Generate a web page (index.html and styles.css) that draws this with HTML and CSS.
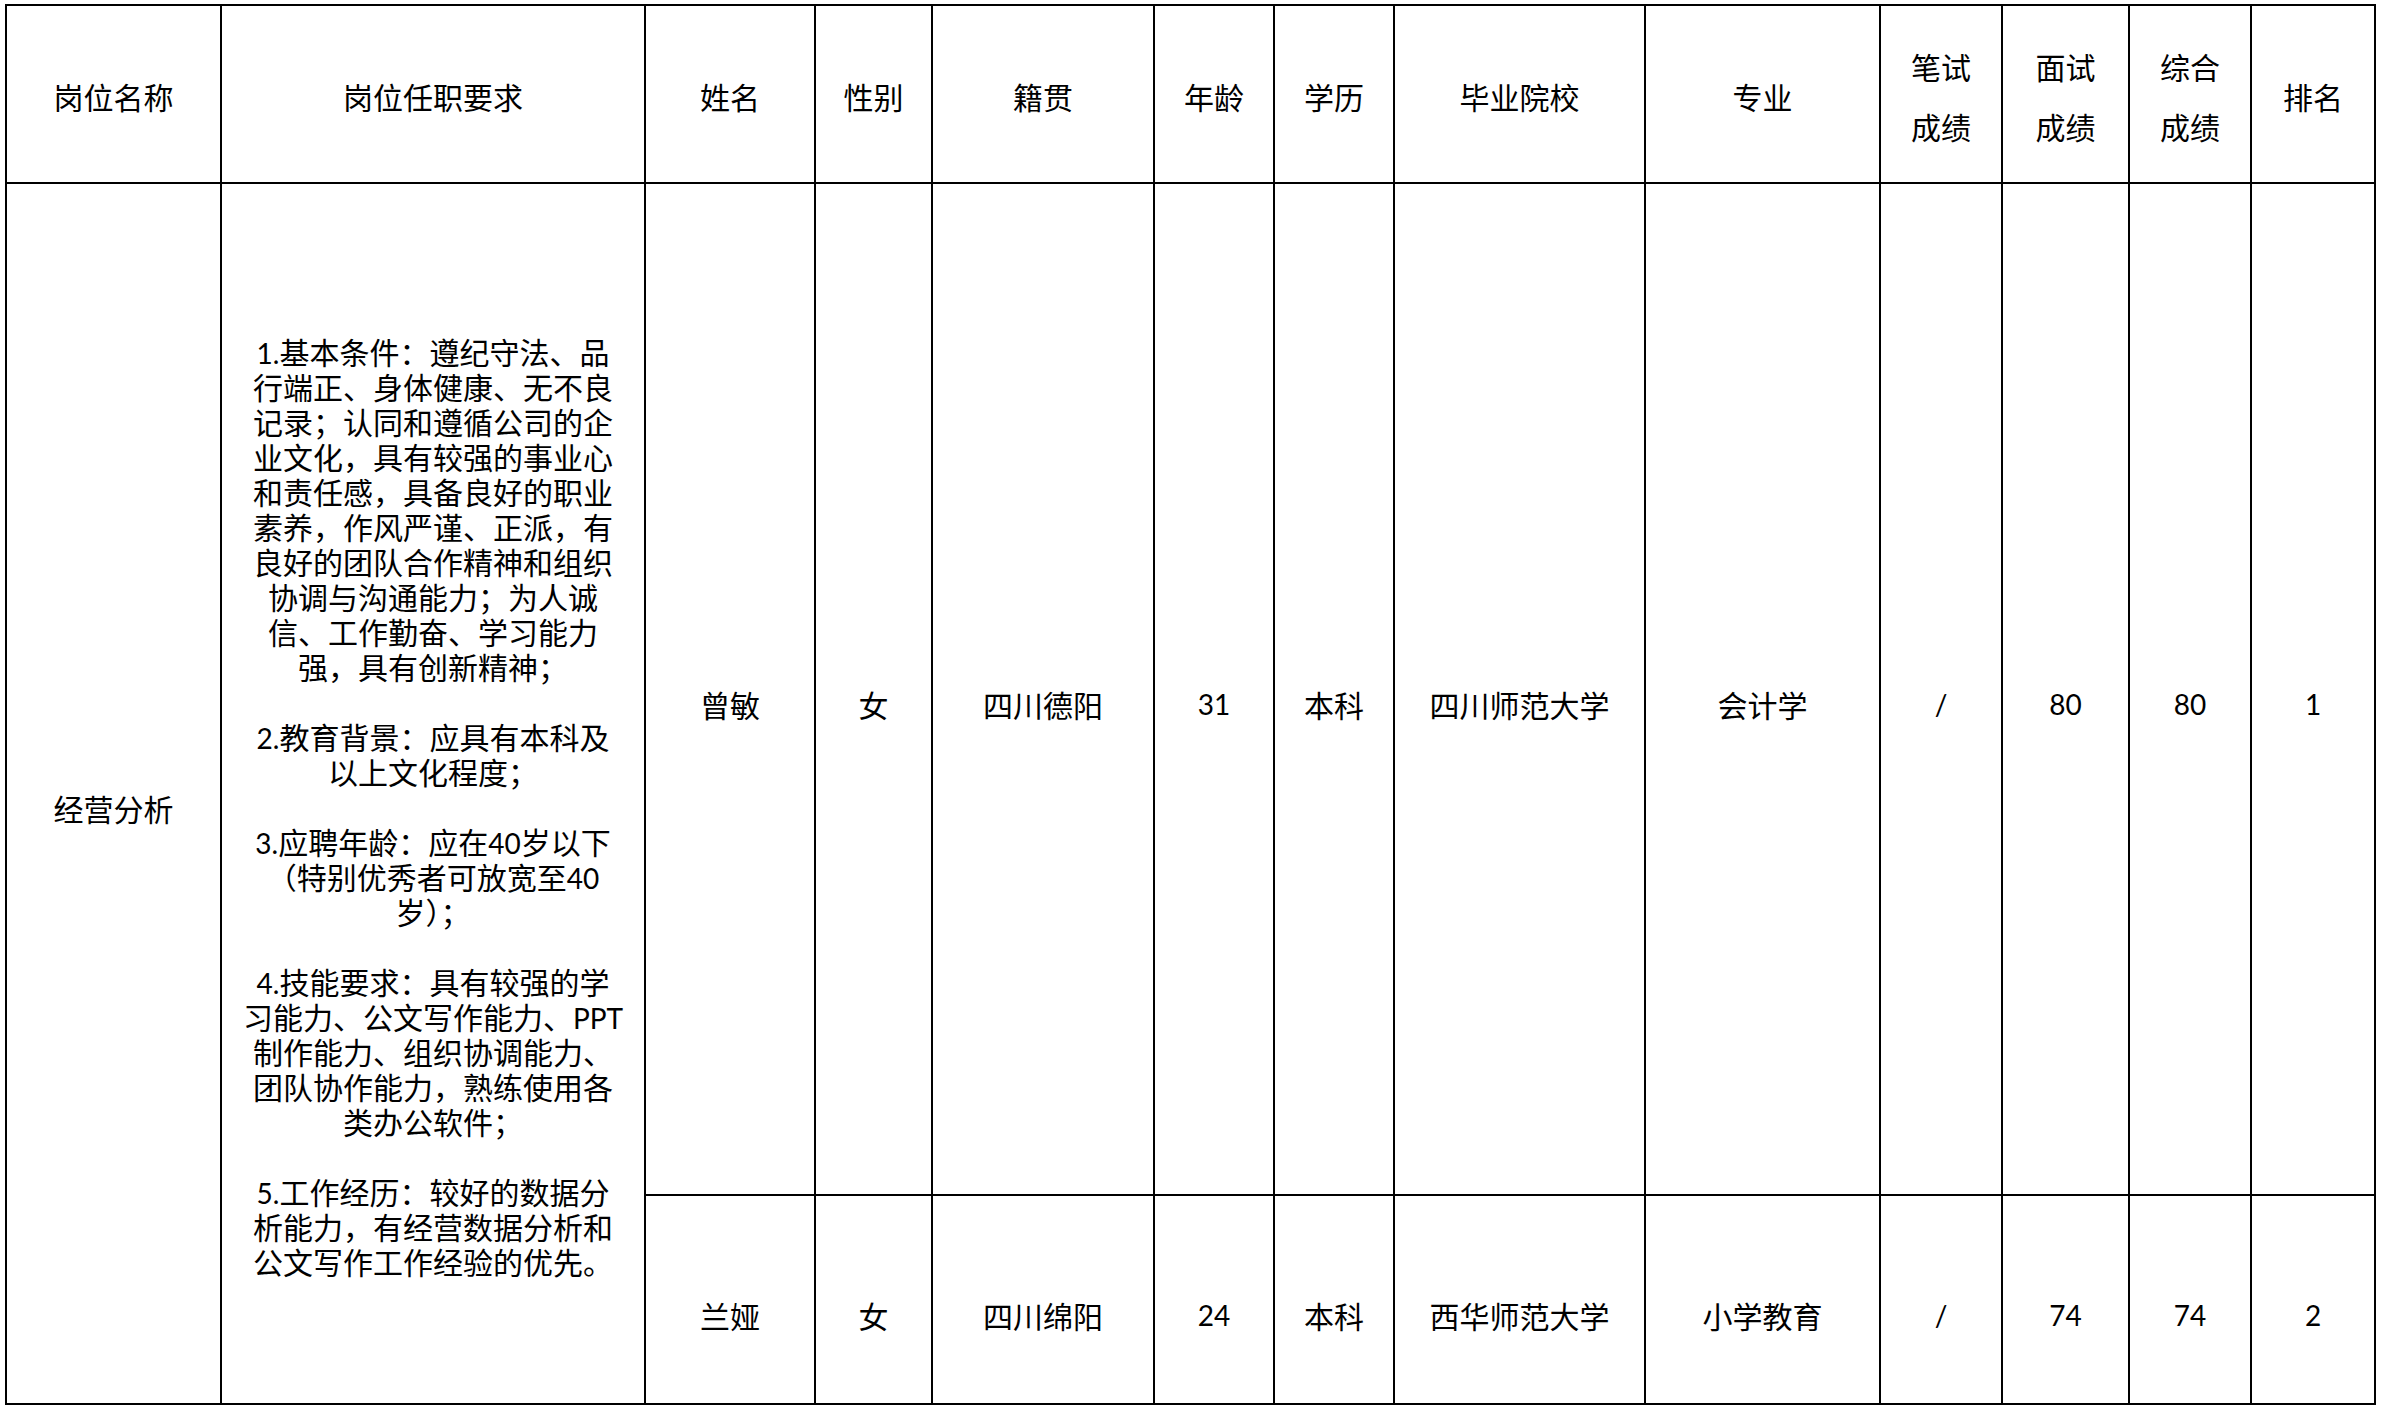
FILE: index.html
```html
<!DOCTYPE html>
<html lang="zh-CN">
<head>
<meta charset="utf-8">
<title>拟录用人员名单</title>
<link rel="stylesheet" href="styles.css">
</head>
<body>
<table class="roster">
  <colgroup>
    <col class="c1"><col class="c2"><col class="c3"><col class="c4"><col class="c5"><col class="c6"><col class="c7"><col class="c8"><col class="c9"><col class="c10"><col class="c11"><col class="c12"><col class="c13">
  </colgroup>
  <thead>
    <tr class="head-row">
      <th>岗位名称</th>
      <th>岗位任职要求</th>
      <th>姓名</th>
      <th>性别</th>
      <th>籍贯</th>
      <th>年龄</th>
      <th>学历</th>
      <th>毕业院校</th>
      <th>专业</th>
      <th>笔试<br>成绩</th>
      <th>面试<br>成绩</th>
      <th>综合<br>成绩</th>
      <th>排名</th>
    </tr>
  </thead>
  <tbody>
    <tr class="row-a">
      <td rowspan="2" class="post">经营分析</td>
      <td rowspan="2" class="req">
        <p><span class="n">1.</span>基本条件：遵纪守法、品<br>行端正、身体健康、无不良<br>记录；认同和遵循公司的企<br>业文化，具有较强的事业心<br>和责任感，具备良好的职业<br>素养，作风严谨、正派，有<br>良好的团队合作精神和组织<br>协调与沟通能力；为人诚<br>信、工作勤奋、学习能力<br>强，具有创新精神；</p>
        <p><span class="n">2.</span>教育背景：应具有本科及<br>以上文化程度；</p>
        <p><span class="n">3.</span>应聘年龄：应在<span class="n">40</span>岁以下<br>（特别优秀者可放宽至<span class="n">40</span><br>岁）；</p>
        <p><span class="n">4.</span>技能要求：具有较强的学<br>习能力、公文写作能力、<span class="n">PPT</span><br>制作能力、组织协调能力、<br>团队协作能力，熟练使用各<br>类办公软件；</p>
        <p><span class="n">5.</span>工作经历：较好的数据分<br>析能力，有经营数据分析和<br>公文写作工作经验的优先。</p>
      </td>
      <td>曾敏</td>
      <td>女</td>
      <td>四川德阳</td>
      <td class="num">31</td>
      <td>本科</td>
      <td>四川师范大学</td>
      <td>会计学</td>
      <td class="num">/</td>
      <td class="num">80</td>
      <td class="num">80</td>
      <td class="num">1</td>
    </tr>
    <tr class="row-b">
      <td>兰娅</td>
      <td>女</td>
      <td>四川绵阳</td>
      <td class="num">24</td>
      <td>本科</td>
      <td>西华师范大学</td>
      <td>小学教育</td>
      <td class="num">/</td>
      <td class="num">74</td>
      <td class="num">74</td>
      <td class="num">2</td>
    </tr>
  </tbody>
</table>
</body>
</html>
```

FILE: styles.css
```css
html, body {
  background: #ffffff;
}

body {
  margin: 4px 0 0 5px;
  color: #000000;
  font-family: "Noto Sans CJK SC", "Noto Sans", sans-serif;
}

.roster {
  border-collapse: collapse;
  table-layout: fixed;
  width: 2371px;
}

.c1 { width: 215px; }
.c2 { width: 424px; }
.c3 { width: 170px; }
.c4 { width: 117px; }
.c5 { width: 222px; }
.c6 { width: 120px; }
.c7 { width: 120px; }
.c8 { width: 251px; }
.c9 { width: 235px; }
.c10 { width: 122px; }
.c11 { width: 127px; }
.c12 { width: 122px; }
.c13 { width: 124px; }

.roster th,
.roster td {
  border: 2px solid #000000;
  padding: 0;
  text-align: center;
  font-size: 30px;
  color: #000000;
}

.roster th {
  font-weight: normal;
  line-height: 60px;
  padding-top: 4px;
  vertical-align: middle;
}

.head-row { height: 178px; }
.row-a { height: 1012px; }
.row-b { height: 209px; }

.roster td {
  vertical-align: middle;
  line-height: 40px;
  padding-top: 30px;
}

.roster td.num {
  font-family: "Lato", "Liberation Sans", sans-serif;
  font-size: 28px;
}

.roster td.post {
  padding-top: 28px;
}

.roster td.req {
  vertical-align: top;
  padding-top: 150px;
  white-space: nowrap;
}

.req p {
  margin: 35px 0 0;
  line-height: 35px;
}

.req p:first-child {
  margin-top: 0;
}

.req .n {
  font-family: "Lato", "Liberation Sans", sans-serif;
  font-size: 28px;
  line-height: 0;
}
```
